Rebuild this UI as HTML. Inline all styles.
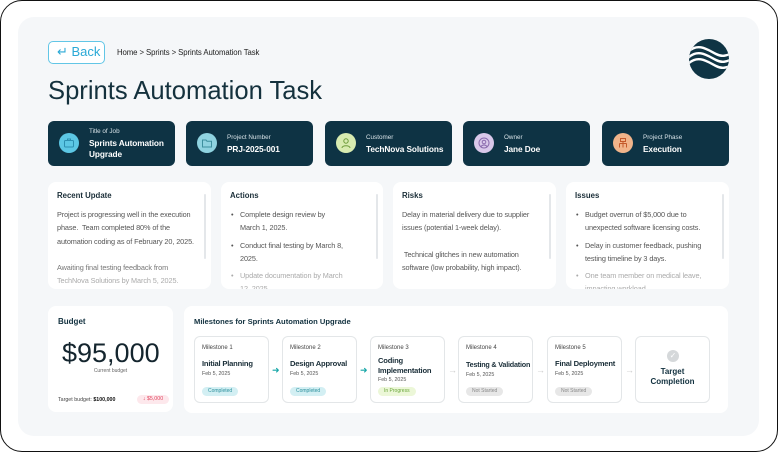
<!DOCTYPE html>
<html><head><meta charset="utf-8"><style>
*{margin:0;padding:0;box-sizing:border-box}
body{width:778px;height:452px;background:#fff;font-family:"Liberation Sans",sans-serif;position:relative;overflow:hidden;color:#12313f}
.frame{position:absolute;left:0;top:0;width:778px;height:452px;border:1.5px solid #111;border-radius:22px}
.panel{position:absolute;left:18px;top:17px;width:741px;height:419px;background:#f5f7f9;border-radius:16px}
.a{position:absolute}
.back{left:48px;top:41px;width:57px;height:23px;border:1.5px solid #62c6e6;border-radius:5px;background:#fff;color:#2aa9d6;font-size:13px;line-height:20px;padding-left:8px}
.crumb{left:117px;top:48px;font-size:7.8px;color:#222;letter-spacing:-0.1px}
h1{position:absolute;left:48px;top:77px;font-size:25.6px;font-weight:normal;color:#14313d}
.ic{top:121px;width:127px;height:45px;background:#0e3344;border-radius:6px}
.ic .c{position:absolute;left:11px;top:12px;width:20px;height:20px;border-radius:50%}
.ic .c svg{position:absolute;left:4px;top:4px}
.ic .l{position:absolute;left:41px;font-size:6.3px;color:#d8e3e8}
.ic .v{position:absolute;left:41px;font-size:8.3px;font-weight:bold;color:#fff;line-height:11px;letter-spacing:-0.1px}
.card{top:182px;height:107px;background:#fff;border-radius:8px;overflow:hidden}
.card h3{position:absolute;left:9px;top:9px;font-size:7.8px;font-weight:bold;color:#1a2e38}
.card .t{position:absolute;left:9px;top:26px;right:12px;font-size:7.3px;line-height:13.3px;color:#555;letter-spacing:-0.1px}
.card .sb{position:absolute;right:5px;top:12px;width:2px;height:65px;background:#e4e7ea;border-radius:1px}
.fade{color:#aaa}
ul{list-style:none}
li{position:relative;padding-left:10px;margin-bottom:4px}
li:before{content:"•";position:absolute;left:1px}
.ms{top:336px;width:75px;height:67px;background:#fff;border:1px solid #e3e6e8;border-radius:6px}
.ms .n{position:absolute;left:7px;top:8px;font-size:6px;color:#444}
.ms .nm{position:absolute;left:7px;top:22px;font-size:7.6px;font-weight:bold;color:#1a2e38;line-height:9.5px;white-space:nowrap;letter-spacing:-0.2px}
.ms .d{position:absolute;left:7px;font-size:5.3px;color:#555}
.ms .b{position:absolute;left:7px;top:50px;height:9px;padding:0 6px;border-radius:5px;font-size:5px;line-height:9px}
.ar{top:365px;font-size:9px}
</style></head><body>
<div class="frame"></div>
<div class="panel"></div>
<div class="a back">&#8629; Back</div>
<div class="a crumb">Home &gt; Sprints &gt; Sprints Automation Task</div>
<h1>Sprints Automation Task</h1>
<svg class="a" style="left:688px;top:38px" width="42" height="42" viewBox="0 0 42 42"><defs><clipPath id="cp"><circle cx="21" cy="21" r="20"/></clipPath></defs><circle cx="21" cy="21" r="20" fill="#0f3444"/><g clip-path="url(#cp)" fill="none" stroke="#fff" stroke-width="2.4"><path d="M0 14 C10 4 20 12 28 16 C34 19 38 18 44 15"/><path d="M0 20 C10 10 20 18 28 22 C34 25 38 24 44 21"/><path d="M0 26 C10 16 20 24 28 28 C34 31 38 30 44 27"/></g></svg>

<div class="a ic" style="left:48px"><div class="c" style="background:#5cc7e4"><svg width="12" height="12" viewBox="0 0 12 12" fill="none" stroke="#2c8fb0" stroke-width="1"><rect x="1.5" y="3.5" width="9" height="6.5" rx="1"/><path d="M4.5 3.5V2h3v1.5"/></svg></div><div class="l" style="top:7px">Title of Job</div><div class="v" style="top:17px">Sprints Automation<br>Upgrade</div></div>
<div class="a ic" style="left:186px"><div class="c" style="background:#8fd3e0"><svg width="12" height="12" viewBox="0 0 12 12" fill="none" stroke="#3d8f9e" stroke-width="1"><path d="M1.5 3h3.5l1 1.2h4.5v5.8h-9z"/></svg></div><div class="l" style="top:13px">Project Number</div><div class="v" style="top:23px">PRJ-2025-001</div></div>
<div class="a ic" style="left:325px"><div class="c" style="background:#d8ebb0"><svg width="12" height="12" viewBox="0 0 12 12" fill="none" stroke="#6d9a3a" stroke-width="1"><circle cx="6" cy="4" r="2.2"/><path d="M2 11c0-3 8-3 8 0"/></svg></div><div class="l" style="top:13px">Customer</div><div class="v" style="top:23px">TechNova Solutions</div></div>
<div class="a ic" style="left:463px"><div class="c" style="background:#d9c8ea"><svg width="12" height="12" viewBox="0 0 12 12" fill="none" stroke="#8a6aad" stroke-width="1"><circle cx="6" cy="6" r="5"/><circle cx="6" cy="5" r="1.8"/><path d="M3 9.5c1.5-2 4.5-2 6 0"/></svg></div><div class="l" style="top:13px">Owner</div><div class="v" style="top:23px">Jane Doe</div></div>
<div class="a ic" style="left:602px"><div class="c" style="background:#f1b48a"><svg width="12" height="12" viewBox="0 0 12 12" fill="none" stroke="#c4582a" stroke-width="1"><rect x="3.5" y="1.5" width="5" height="3"/><path d="M6 4.5v2M2.5 6.5h7M2.5 6.5v4M6 6.5v4M9.5 6.5v4"/></svg></div><div class="l" style="top:13px">Project Phase</div><div class="v" style="top:23px">Execution</div></div>

<div class="a card" style="left:48px;width:163px"><h3>Recent Update</h3><div class="sb"></div><div class="t">Project is progressing well in the execution phase.&nbsp; Team completed 80% of the automation coding as of February 20, 2025.<br><br><span style="color:#777">Awaiting final testing feedback from</span> <span class="fade">TechNova Solutions by March 5, 2025.</span></div></div>
<div class="a card" style="left:221px;width:162px"><h3>Actions</h3><div class="sb"></div><div class="t" style="right:40px"><ul><li>Complete design review by March 1, 2025.</li><li>Conduct final testing by March 8, 2025.</li><li class="fade">Update documentation by March 12, 2025.</li></ul></div></div>
<div class="a card" style="left:393px;width:163px"><h3>Risks</h3><div class="sb"></div><div class="t">Delay in material delivery due to supplier issues (potential 1-week delay).<br><br>&nbsp;Technical glitches in new automation software (low probability, high impact).<br><br><span style="color:#ccc">Resource constraints if team reallocates to</span></div></div>
<div class="a card" style="left:566px;width:163px"><h3>Issues</h3><div class="sb"></div><div class="t"><ul><li>Budget overrun of $5,000 due to unexpected software licensing costs.</li><li>Delay in customer feedback, pushing testing timeline by 3 days.</li><li class="fade">One team member on medical leave, impacting workload.</li></ul></div></div>

<div class="a" style="left:48px;top:306px;width:125px;height:106px;background:#fff;border-radius:8px">
<div class="a" style="left:10px;top:11px;font-size:8px;font-weight:bold">Budget</div>
<div class="a" style="left:14px;top:32px;font-size:27px;color:#14252e">$95,000</div>
<div class="a" style="left:0;width:125px;text-align:center;top:62px;font-size:5px;color:#666">Current budget</div>
<div class="a" style="left:10px;top:91px;font-size:5.3px;color:#444">Target budget: <b style="color:#111">$100,000</b></div>
<div class="a" style="left:89px;top:89px;width:32px;height:9px;background:#fde8ec;border-radius:5px;font-size:5.3px;color:#e2455f;text-align:center;line-height:9px">↓ $5,000</div>
</div>
<div class="a" style="left:184px;top:306px;width:544px;height:107px;background:#fff;border-radius:8px">
<div class="a" style="left:10px;top:11px;font-size:7.6px;font-weight:bold">Milestones for Sprints Automation Upgrade</div>
</div>

<div class="a ms" style="left:194px"><div class="n">Milestone 1</div><div class="nm" style="top:22px">Initial Planning</div><div class="d" style="top:34px">Feb 5, 2025</div><div class="b" style="background:#d3eff3;color:#2a8f9c">Completed</div></div>
<div class="a ar" style="left:272px;color:#18a7a8">➜</div>
<div class="a ms" style="left:282px"><div class="n">Milestone 2</div><div class="nm" style="top:22px">Design Approval</div><div class="d" style="top:34px">Feb 5, 2025</div><div class="b" style="background:#d3eff3;color:#2a8f9c">Completed</div></div>
<div class="a ar" style="left:360px;color:#18a7a8">➜</div>
<div class="a ms" style="left:370px"><div class="n">Milestone 3</div><div class="nm" style="top:19px">Coding<br>Implementation</div><div class="d" style="top:40px">Feb 5, 2025</div><div class="b" style="background:#ecf7d8;color:#6aa63a">In Progress</div></div>
<div class="a ar" style="left:448px;color:#ccc">→</div>
<div class="a ms" style="left:458px"><div class="n">Milestone 4</div><div class="nm" style="top:23px;font-size:7.2px">Testing &amp; Validation</div><div class="d" style="top:35px">Feb 5, 2025</div><div class="b" style="background:#e7e7e7;color:#888">Not Started</div></div>
<div class="a ar" style="left:536px;color:#ccc">→</div>
<div class="a ms" style="left:547px"><div class="n">Milestone 5</div><div class="nm" style="top:22px">Final Deployment</div><div class="d" style="top:34px">Feb 5, 2025</div><div class="b" style="background:#e7e7e7;color:#888">Not Started</div></div>
<div class="a ar" style="left:625px;color:#ccc">→</div>
<div class="a ms" style="left:635px"><div class="a" style="left:31px;top:13px;width:12px;height:12px;border-radius:50%;background:#d5d8da;color:#fff;font-size:8px;text-align:center;line-height:12px">✓</div><div class="a" style="left:0;width:73px;top:30px;text-align:center;font-size:8px;font-weight:bold;line-height:10px">Target<br>Completion</div></div>
</body></html>
